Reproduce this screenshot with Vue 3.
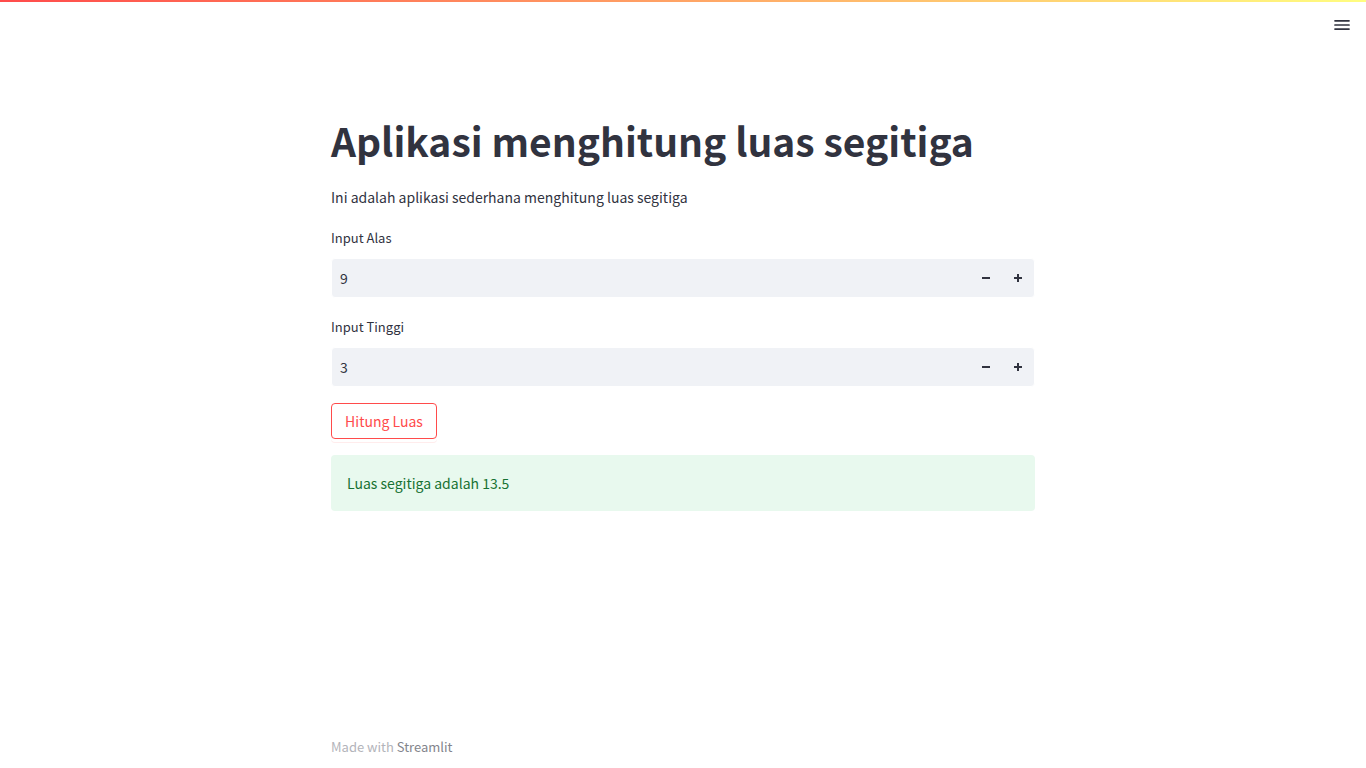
<script setup>
import { ref } from 'vue'

const fields = ref([
  { id: 'alas', label: 'Input Alas', value: '9' },
  { id: 'tinggi', label: 'Input Tinggi', value: '3' },
])
const area = ref(13.5)

function step(field, amount) {
  field.value = String(Number(field.value) + amount)
}

function calculate() {
  area.value = (Number(fields.value[0].value) * Number(fields.value[1].value)) / 2
}
</script>

<template>
  <div class="app">
    <div class="decoration"></div>
    <header class="toolbar">
      <button class="menu" type="button" aria-label="Menu">
        <svg viewBox="0 0 16 16" width="16" height="16" fill="currentColor" aria-hidden="true">
          <rect x="0.2" y="3" width="15.6" height="1.7" rx="0.7" />
          <rect x="0.2" y="7.15" width="15.6" height="1.7" rx="0.7" />
          <rect x="0.2" y="11.3" width="15.6" height="1.7" rx="0.7" />
        </svg>
      </button>
    </header>

    <main class="content">
      <h1>Aplikasi menghitung luas segitiga</h1>
      <p class="intro">Ini adalah aplikasi sederhana menghitung luas segitiga</p>

      <div class="fields">
        <div v-for="field in fields" :key="field.id" class="field">
          <label :for="field.id">{{ field.label }}</label>
          <div class="number">
            <input :id="field.id" v-model="field.value" type="text" inputmode="decimal" />
            <button type="button" :aria-label="'Kurangi ' + field.label" @click="step(field, -1)">
              <svg viewBox="0 0 8 8" width="8" height="8" fill="currentColor" aria-hidden="true">
                <path d="M0 3h8v2H0z" />
              </svg>
            </button>
            <button type="button" :aria-label="'Tambah ' + field.label" @click="step(field, 1)">
              <svg viewBox="0 0 8 8" width="8" height="8" fill="currentColor" aria-hidden="true">
                <path d="M3 0h2v3h3v2H5v3H3V5H0V3h3z" />
              </svg>
            </button>
          </div>
        </div>
      </div>

      <button class="calculate" type="button" @click="calculate">Hitung Luas</button>
      <div class="result" role="status">Luas segitiga adalah {{ area }}</div>
    </main>

    <footer class="footer">Made with <a href="#">Streamlit</a></footer>
  </div>
</template>

<style>
body {
  margin: 0;
  background: #fff;
}
</style>

<style scoped>
.app {
  display: flex;
  flex-direction: column;
  min-height: 100vh;
  color: #31333f;
  font-family: "Source Sans Pro", "Noto Sans CJK SC", sans-serif;
  font-size: 14px;
  line-height: 24px;
}

.app * {
  box-sizing: border-box;
}

.decoration {
  height: 2px;
  background: linear-gradient(90deg, #ff4b4b, #fffd80);
}

.toolbar {
  display: flex;
  justify-content: flex-end;
  padding: 15px 16px 0;
}

button,
input {
  font: inherit;
  color: inherit;
  border: 0;
  background: transparent;
  padding: 0;
}

button {
  cursor: pointer;
}

.menu {
  display: flex;
}

.content,
.footer {
  width: 100%;
  max-width: 736px;
  margin: 0 auto;
  padding: 0 16px;
}

.content {
  flex: 1;
  padding-top: 80px;
}

h1 {
  margin: 0;
  font-size: 39px;
  line-height: 54px;
  font-weight: 700;
}

.intro {
  margin: 18px 0 17px;
}

.fields {
  display: grid;
  gap: 17px;
  margin-bottom: 16px;
}

.field label {
  display: block;
  margin-bottom: 8px;
  font-size: 13px;
  line-height: 24px;
}

.number {
  display: flex;
  height: 40px;
  border: 1px solid #fff;
  border-radius: 4px;
  background: #f0f2f6;
  overflow: hidden;
}

.number input {
  flex: 1;
  min-width: 0;
  padding: 0 8px;
  outline: none;
}

.number button {
  display: flex;
  align-items: center;
  justify-content: center;
  width: 32px;
}

.calculate {
  display: block;
  min-width: 106px;
  height: 36px;
  padding: 0 12px;
  border: 1px solid #ff4b4b;
  border-radius: 4px;
  color: #ff4b4b;
  line-height: 20px;
  box-shadow: 0 3px 0 #fff, 0 4px 0 #ffecec;
}

.result {
  margin-top: 16px;
  padding: 16px;
  border-radius: 4px;
  background: #e8f9ee;
  color: #177233;
}

.footer {
  padding-bottom: 9px;
  color: #b3b4ba;
  font-size: 13px;
}

.footer a {
  color: #83858c;
  text-decoration: none;
}
</style>
